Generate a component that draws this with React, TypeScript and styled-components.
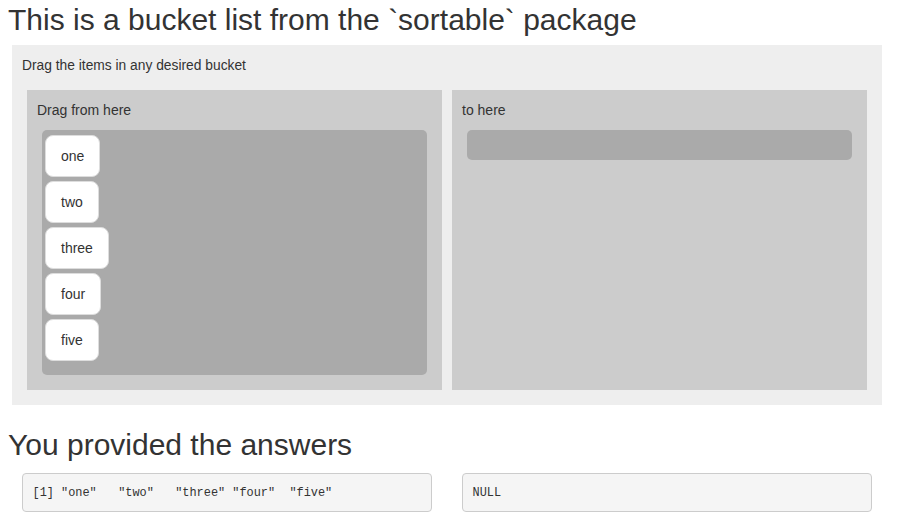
import React from "react";
import styled, { createGlobalStyle } from "styled-components";

const GlobalStyle = createGlobalStyle`
  html, body {
    margin: 0;
    padding: 0;
    background: #fff;
  }
  body {
    font-family: "Liberation Sans", Arial, Helvetica, sans-serif;
    font-size: 14px;
    line-height: 20px;
    color: #333;
  }
  * { box-sizing: border-box; }
`;

const Page = styled.div`
  padding: 3px 17px 0 8px;
`;

const Heading = styled.h2`
  margin: 0;
  font-size: 30px;
  font-weight: 400;
  line-height: 33px;
  color: #333;
`;

const AnswersHeading = styled(Heading)`
  margin-top: 23px;
`;

const BucketPanel = styled.div`
  margin: 9px 0 0 4px;
  width: 870px;
  background: #eee;
  padding: 10px 15px 15px;
`;

const PanelHeader = styled.div`
  margin-left: -5px;
  font-size: 13.8px;
  line-height: 21px;
  margin-bottom: 14px;
`;

const BucketRow = styled.div`
  display: grid;
  grid-template-columns: 415px 415px;
  gap: 10px;
  align-items: stretch;
`;

const Bucket = styled.div`
  background: #ccc;
  padding: 10px 15px 15px;
`;

const BucketTitle = styled.div`
  margin-left: -5px;
  font-size: 14px;
  line-height: 20px;
  margin-bottom: 10px;
`;

const RankList = styled.div`
  display: flex;
  flex-direction: column;
  align-items: flex-start;
  gap: 4px;
  background: #aaa;
  border-radius: 5px;
  min-height: 30px;
  padding: ${(p: { $empty?: boolean }) => (p.$empty ? "0" : "5px 3px 14px")};
`;

const RankItem = styled.div`
  background: #fff;
  border: 1px solid #ddd;
  border-radius: 8px;
  padding: 10px 15px;
  font-size: 14px;
  line-height: 20px;
  color: #333;
`;

const OutputRow = styled.div`
  display: grid;
  grid-template-columns: 410px 410px;
  gap: 30px;
  margin: 12px 0 0 14px;
`;

const Output = styled.pre`
  margin: 0;
  background: #f5f5f5;
  border: 1px solid #ccc;
  border-radius: 4px;
  padding: 10px 9.5px 9px;
  font-family: "Liberation Mono", "DejaVu Sans Mono", monospace;
  font-size: 11.9px;
  line-height: 18px;
  color: #333;
  white-space: pre;
`;

const items = ["one", "two", "three", "four", "five"];

export default function App() {
  return (
    <>
      <GlobalStyle />
      <Page>
        <Heading>This is a bucket list from the `sortable` package</Heading>
        <BucketPanel>
          <PanelHeader>Drag the items in any desired bucket</PanelHeader>
          <BucketRow>
            <Bucket>
              <BucketTitle>Drag from here</BucketTitle>
              <RankList>
                {items.map((it) => (
                  <RankItem key={it}>{it}</RankItem>
                ))}
              </RankList>
            </Bucket>
            <Bucket>
              <BucketTitle>to here</BucketTitle>
              <RankList $empty />
            </Bucket>
          </BucketRow>
        </BucketPanel>
        <AnswersHeading>You provided the answers</AnswersHeading>
        <OutputRow>
          <Output>{'[1] "one"   "two"   "three" "four"  "five" '}</Output>
          <Output>NULL</Output>
        </OutputRow>
      </Page>
    </>
  );
}
